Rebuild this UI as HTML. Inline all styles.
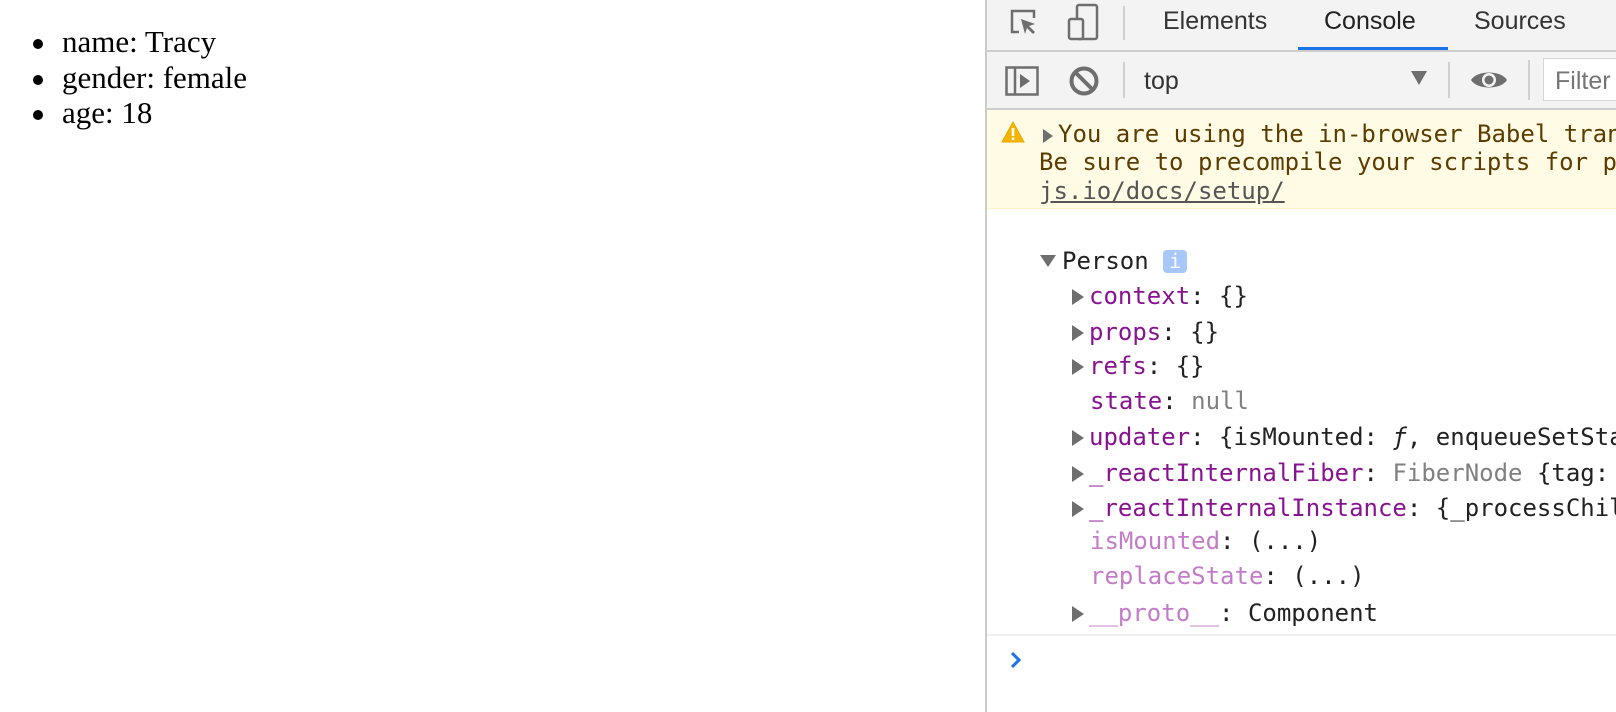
<!DOCTYPE html>
<html><head><meta charset="utf-8"><style>
*{margin:0;padding:0;box-sizing:border-box}
body{width:1616px;height:712px;background:#fff;position:relative;overflow:hidden;font-family:"Liberation Serif",serif}
.li{position:absolute;left:62px;font-size:31px;line-height:36px;height:36px;color:#000}
.li:before{content:"";position:absolute;left:-29px;top:15px;width:10px;height:10px;border-radius:50%;background:#000}
#dt{position:absolute;left:985px;top:0;width:631px;height:712px;border-left:2px solid #cbcbcb;background:#fff;overflow:hidden}
.bar{position:absolute;left:0;width:631px;background:#f3f3f3;border-bottom:2px solid #cdcdcd}
.tab{position:absolute;top:0;height:50px;line-height:42px;font-family:"Liberation Sans",sans-serif;font-size:25px;color:#333}
.sep{position:absolute;width:2px;background:#d0d0d0}
.m{font-family:"DejaVu Sans Mono","Liberation Mono",monospace;font-size:24px;position:absolute;white-space:pre;height:35px;line-height:35px;color:#222}
.p{color:#881391}.f{color:#c27cc8}.g{color:#808080}
.tri{display:inline-block;width:0;height:0;border-top:8px solid transparent;border-bottom:8px solid transparent;border-left:12px solid #6e6e6e;margin-right:5px;vertical-align:-1px}
</style></head><body>
<div class="li" style="top:24px">name: Tracy</div>
<div class="li" style="top:60px">gender: female</div>
<div class="li" style="top:95px">age: 18</div>

<div id="dt">
 <div class="bar" style="top:0;height:52px">
  <svg style="position:absolute;left:21px;top:7px" width="32" height="32" viewBox="0 0 32 32"><path d="M11 25H4V4h22v7" fill="none" stroke="#6e6e6e" stroke-width="2.5"/><path d="M13 12l14 5-6 2 6 6-2 2-6-6-2 6z" fill="#6e6e6e"/></svg>
  <svg style="position:absolute;left:80px;top:3px" width="34" height="40" viewBox="0 0 34 40"><rect x="10" y="2" width="20" height="34" rx="2" fill="none" stroke="#6e6e6e" stroke-width="2.5"/><rect x="2" y="16" width="14" height="20" rx="2" fill="#f3f3f3" stroke="#6e6e6e" stroke-width="2.5"/></svg>
  <div class="sep" style="left:136px;top:6px;height:34px"></div>
  <div class="tab" style="left:176px">Elements</div>
  <div class="tab" style="left:337px;color:#222">Console</div>
  <div class="tab" style="left:487px">Sources</div>
  <div style="position:absolute;left:311px;top:47px;width:150px;height:3px;background:#1a73e8"></div>
 </div>
 <div class="bar" style="top:52px;height:58px">
  <svg style="position:absolute;left:18px;top:14px" width="34" height="30" viewBox="0 0 34 30"><rect x="1.5" y="1.5" width="31" height="27" fill="none" stroke="#6e6e6e" stroke-width="2.5"/><line x1="10" y1="1" x2="10" y2="29" stroke="#6e6e6e" stroke-width="2.5"/><path d="M15 8l10 7-10 7z" fill="#6e6e6e"/></svg>
  <svg style="position:absolute;left:81px;top:13px" width="32" height="32" viewBox="0 0 32 32"><circle cx="16" cy="16" r="12.5" fill="none" stroke="#6e6e6e" stroke-width="4"/><line x1="8" y1="8" x2="24" y2="24" stroke="#6e6e6e" stroke-width="4"/></svg>
  <div class="sep" style="left:136px;top:10px;height:36px"></div>
  <div style="position:absolute;left:157px;top:15px;font-family:'Liberation Sans',sans-serif;font-size:25px;color:#333">top</div>
  <svg style="position:absolute;left:424px;top:19px" width="16" height="14"><path d="M0 0h16L8 14z" fill="#6e6e6e"/></svg>
  <div class="sep" style="left:461px;top:10px;height:36px"></div>
  <svg style="position:absolute;left:483px;top:15px" width="38" height="26" viewBox="0 0 38 26"><path d="M1 13C7 3 31 3 37 13C31 23 7 23 1 13z" fill="#6e6e6e"/><circle cx="19" cy="13" r="7" fill="#f3f3f3"/><circle cx="19" cy="13" r="4.5" fill="#6e6e6e"/></svg>
  <div class="sep" style="left:541px;top:8px;height:40px"></div>
  <div style="position:absolute;left:556px;top:6px;width:90px;height:43px;background:#fff;border:1px solid #d6d6d6;font-family:'Liberation Sans',sans-serif;font-size:25px;color:#757575;padding:8px 0 0 11px">Filter</div>
 </div>
 <div style="position:absolute;left:0;top:110px;width:631px;height:99px;background:#fffbe5;border-bottom:1px solid #fff5c2"></div>
 <svg style="position:absolute;left:14px;top:121px" width="24" height="22" viewBox="0 0 24 22"><path d="M12 1L23 21H1z" fill="#f4b400" stroke="#e8a800"/><rect x="10.7" y="7" width="2.6" height="8" fill="#fff"/><rect x="10.7" y="16.5" width="2.6" height="2.6" fill="#fff"/></svg>
 <div class="m" style="left:56px;top:120px;color:#5c3c00;line-height:29px"><span class="tri" style="border-top-width:7px;border-bottom-width:7px;border-left-width:10px;margin-right:5px"></span>You are using the in-browser Babel transformer.</div>
 <div class="m" style="left:52px;top:148px;color:#5c3c00;line-height:29px">Be sure to precompile your scripts for production</div>
 <div class="m" style="left:52px;top:177px;line-height:29px;text-decoration:underline;color:#555">js.io/docs/setup/</div>

 <div class="m" style="left:53px;top:244px"><span class="tri" style="border-left:8px solid transparent;border-right:8px solid transparent;border-top:12px solid #6e6e6e;border-bottom:0;margin-right:6px;vertical-align:2px"></span>Person <span style="display:inline-block;width:24px;height:23px;background:#a8c7fa;border-radius:4px;color:#fff;font-size:20px;line-height:23px;text-align:center;vertical-align:1px">i</span></div>
 <div class="m" style="left:85px;top:279px"><span class="tri"></span><span class="p">context</span>: {}</div>
 <div class="m" style="left:85px;top:315px"><span class="tri"></span><span class="p">props</span>: {}</div>
 <div class="m" style="left:85px;top:349px"><span class="tri"></span><span class="p">refs</span>: {}</div>
 <div class="m" style="left:103px;top:384px"><span class="p">state</span>: <span class="g">null</span></div>
 <div class="m" style="left:85px;top:420px"><span class="tri"></span><span class="p">updater</span>: {isMounted: <i>ƒ</i>, enqueueSetState: ƒ}</div>
 <div class="m" style="left:85px;top:456px"><span class="tri"></span><span class="p">_reactInternalFiber</span>: <span class="g">FiberNode</span> {tag: 2}</div>
 <div class="m" style="left:85px;top:491px"><span class="tri"></span><span class="p">_reactInternalInstance</span>: {_processChildContext}</div>
 <div class="m" style="left:103px;top:524px"><span class="f">isMounted</span>: (...)</div>
 <div class="m" style="left:103px;top:559px"><span class="f">replaceState</span>: (...)</div>
 <div class="m" style="left:85px;top:596px"><span class="tri"></span><span class="f">__proto__</span>: Component</div>
 <div style="position:absolute;left:0;top:634px;width:631px;height:2px;background:#f0f0f0"></div>
 <svg style="position:absolute;left:23px;top:651px" width="12" height="18" viewBox="0 0 12 18"><path d="M2 2l7 7-7 7" fill="none" stroke="#1a73e8" stroke-width="3"/></svg>
</div>
</body></html>
